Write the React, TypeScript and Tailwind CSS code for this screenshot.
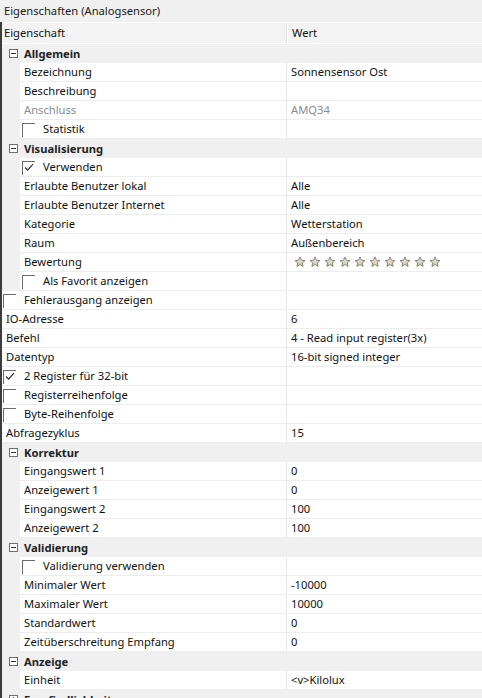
import React from 'react';

type Row =
  | { kind: 'cat'; label: string; open?: boolean }
  | {
      kind: 'prop';
      label: string;
      value?: string;
      nested?: boolean;
      check?: boolean;
      muted?: boolean;
      stars?: number;
    };

const rows: Row[] = [
  { kind: 'cat', label: 'Allgemein', open: true },
  { kind: 'prop', nested: true, label: 'Bezeichnung', value: 'Sonnensensor Ost' },
  { kind: 'prop', nested: true, label: 'Beschreibung' },
  { kind: 'prop', nested: true, label: 'Anschluss', value: 'AMQ34', muted: true },
  { kind: 'prop', nested: true, label: 'Statistik', check: false },
  { kind: 'cat', label: 'Visualisierung', open: true },
  { kind: 'prop', nested: true, label: 'Verwenden', check: true },
  { kind: 'prop', nested: true, label: 'Erlaubte Benutzer lokal', value: 'Alle' },
  { kind: 'prop', nested: true, label: 'Erlaubte Benutzer Internet', value: 'Alle' },
  { kind: 'prop', nested: true, label: 'Kategorie', value: 'Wetterstation' },
  { kind: 'prop', nested: true, label: 'Raum', value: 'Außenbereich' },
  { kind: 'prop', nested: true, label: 'Bewertung', stars: 10 },
  { kind: 'prop', nested: true, label: 'Als Favorit anzeigen', check: false },
  { kind: 'prop', label: 'Fehlerausgang anzeigen', check: false },
  { kind: 'prop', label: 'IO-Adresse', value: '6' },
  { kind: 'prop', label: 'Befehl', value: '4 - Read input register(3x)' },
  { kind: 'prop', label: 'Datentyp', value: '16-bit signed integer' },
  { kind: 'prop', label: '2 Register für 32-bit', check: true },
  { kind: 'prop', label: 'Registerreihenfolge', check: false },
  { kind: 'prop', label: 'Byte-Reihenfolge', check: false },
  { kind: 'prop', label: 'Abfragezyklus', value: '15' },
  { kind: 'cat', label: 'Korrektur', open: true },
  { kind: 'prop', nested: true, label: 'Eingangswert 1', value: '0' },
  { kind: 'prop', nested: true, label: 'Anzeigewert 1', value: '0' },
  { kind: 'prop', nested: true, label: 'Eingangswert 2', value: '100' },
  { kind: 'prop', nested: true, label: 'Anzeigewert 2', value: '100' },
  { kind: 'cat', label: 'Validierung', open: true },
  { kind: 'prop', nested: true, label: 'Validierung verwenden', check: false },
  { kind: 'prop', nested: true, label: 'Minimaler Wert', value: '-10000' },
  { kind: 'prop', nested: true, label: 'Maximaler Wert', value: '10000' },
  { kind: 'prop', nested: true, label: 'Standardwert', value: '0' },
  { kind: 'prop', nested: true, label: 'Zeitüberschreitung Empfang', value: '0' },
  { kind: 'cat', label: 'Anzeige', open: true },
  { kind: 'prop', nested: true, label: 'Einheit', value: '<v>Kilolux' },
  { kind: 'cat', label: 'Empfindlichkeit', open: false },
];

const ExpandBox = ({ open }: { open?: boolean }) => (
  <span className="relative w-[9px] h-[9px] border border-[#707070] bg-white shrink-0">
    <span className="absolute left-[1px] top-[3px] w-[5px] h-px bg-[#333]" />
    {!open && <span className="absolute left-[3px] top-[1px] w-px h-[5px] bg-[#333]" />}
  </span>
);

const CheckBox = ({ checked }: { checked?: boolean }) => (
  <span className="relative self-end w-[13px] h-[14px] border-t border-l border-[#6a6a6a] shrink-0">
    {checked && (
      <svg className="absolute left-[1px] top-[1px]" width="10" height="9" viewBox="0 0 10 9">
        <path d="M1 4.5 L3.6 7.2 L9 1.2" fill="none" stroke="#2a2a2a" strokeWidth="1.1" />
      </svg>
    )}
  </span>
);

const Star = () => (
  <svg width="12" height="12" viewBox="0 0 24 24">
    <defs>
      <linearGradient id="sg" x1="0" y1="0" x2="0" y2="1">
        <stop offset="0" stopColor="#ecebe4" />
        <stop offset="1" stopColor="#c9c5b6" />
      </linearGradient>
    </defs>
    <path
      d="M12 1.8 L14.9 8.4 L22 9.1 L16.6 13.8 L18.2 20.8 L12 17.1 L5.8 20.8 L7.4 13.8 L2 9.1 L9.1 8.4 Z"
      fill="url(#sg)"
      stroke="#8a8576"
      strokeWidth="2"
      strokeLinejoin="round"
    />
  </svg>
);

const PropRow = ({ row }: { row: Extract<Row, { kind: 'prop' }> }) => (
  <div className="flex h-[19px]">
    {row.nested && <div className="w-[18px] bg-[#f0f0f0] shrink-0" />}
    <div className="flex flex-1 border-b border-[#ededed] bg-white">
      <div
        className={`flex items-center shrink-0 border-r border-[#e8e8e8] ${
          row.nested ? 'w-[267px]' : 'w-[285px]'
        }`}
      >
        {row.check !== undefined ? (
          <div className={`flex h-full items-stretch ${row.nested ? 'pl-[2px]' : 'pl-[1px]'}`}>
            <div className="flex h-full items-end pb-[1px]">
              <CheckBox checked={row.check} />
            </div>
            <span className="leading-[18px] pl-[8px]">{row.label}</span>
          </div>
        ) : (
          <span className={`leading-[18px] pl-[4px] ${row.muted ? 'text-[#8c8c8c]' : ''}`}>{row.label}</span>
        )}
      </div>
      <div className={`flex items-center flex-1 pl-[4px] ${row.muted ? 'text-[#8c8c8c]' : ''}`}>
        {row.stars ? (
          <div className="flex gap-[3px] pl-[3px]">
            {Array.from({ length: row.stars }).map((_, i) => (
              <Star key={i} />
            ))}
          </div>
        ) : (
          <span className="leading-[18px]">{row.value}</span>
        )}
      </div>
    </div>
  </div>
);

export default function App() {
  return (
    <div
      className="h-[698px] w-[482px] overflow-hidden bg-[#f0f0f0] text-[11.2px] text-[#111]"
      style={{ fontFamily: '"Segoe UI", "Noto Sans", sans-serif' }}
    >
      <div className="h-[22px] flex items-center pl-[4px] text-[#1a1a1a]">Eigenschaften (Analogsensor)</div>
      <div className="border-l-2 border-[#3c3c3c]">
        <div className="flex h-[22px] bg-[#f3f3f3] border-t border-white border-b border-[#dedede]">
          <div className="w-[285px] flex items-center pl-[2px] border-r border-[#e2e2e2]">Eigenschaft</div>
          <div className="flex-1 flex items-center pl-[4px] border-l border-white">Wert</div>
        </div>
        {rows.map((row, i) =>
          row.kind === 'cat' ? (
            <div key={i} className="flex h-[19px] items-center bg-[#f0f0f0]">
              <div className="w-[22px] flex justify-center pl-[1px]">
                <ExpandBox open={row.open} />
              </div>
              <span className="font-bold leading-[18px] text-[#222]">{row.label}</span>
            </div>
          ) : (
            <PropRow key={i} row={row} />
          )
        )}
      </div>
    </div>
  );
}
